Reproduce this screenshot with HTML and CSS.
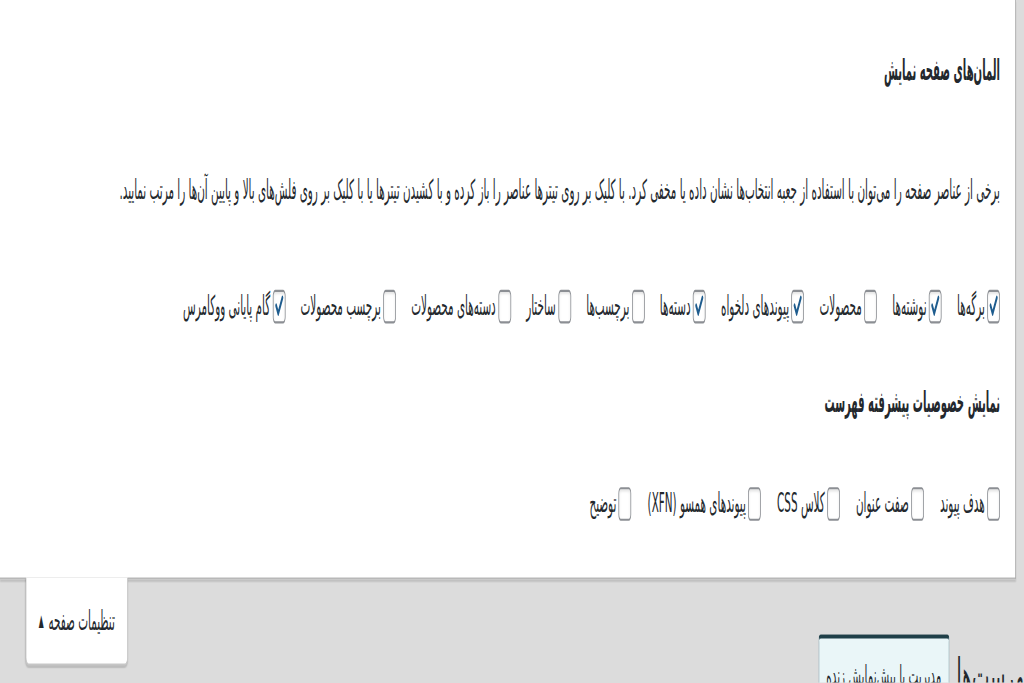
FILE: index.html
```html
<!DOCTYPE html>
<html lang="fa">
<head>
<meta charset="utf-8">
<title>تنظیمات صفحه</title>
<link rel="stylesheet" href="styles.css">
</head>
<body>
<div class="stage" dir="rtl">
  <div class="screen-meta">
    <h5 class="sec-title">المان‌های صفحه نمایش</h5>
    <p class="desc">برخی از عناصر صفحه را می‌توان با استفاده از جعبه انتخاب‌ها نشان داده یا مخفی کرد. با کلیک بر روی تیترها عناصر را باز کرده و با کشیدن تیترها یا با کلیک بر روی فلش‌های بالا و پایین آن‌ها را مرتب نمایید.</p>
    <div class="prefs prefs-one">
      <label class="opt"><span class="cb on"><svg viewBox="0 0 16 16"><path d="M3.6 7.4 L6.6 11.8 L12.6 3.2" /></svg></span>برگه‌ها</label>
      <label class="opt"><span class="cb on"><svg viewBox="0 0 16 16"><path d="M3.6 7.4 L6.6 11.8 L12.6 3.2" /></svg></span>نوشته‌ها</label>
      <label class="opt"><span class="cb"></span>محصولات</label>
      <label class="opt"><span class="cb on"><svg viewBox="0 0 16 16"><path d="M3.6 7.4 L6.6 11.8 L12.6 3.2" /></svg></span>پیوندهای دلخواه</label>
      <label class="opt"><span class="cb on"><svg viewBox="0 0 16 16"><path d="M3.6 7.4 L6.6 11.8 L12.6 3.2" /></svg></span>دسته‌ها</label>
      <label class="opt"><span class="cb"></span>برچسب‌ها</label>
      <label class="opt"><span class="cb"></span>ساختار</label>
      <label class="opt"><span class="cb"></span>دسته‌های محصولات</label>
      <label class="opt"><span class="cb"></span>برچسب محصولات</label>
      <label class="opt"><span class="cb on"><svg viewBox="0 0 16 16"><path d="M3.6 7.4 L6.6 11.8 L12.6 3.2" /></svg></span>گام پایانی ووکامرس</label>
    </div>
    <h5 class="sec-title second">نمایش خصوصیات پیشرفته فهرست</h5>
    <div class="prefs prefs-two">
      <label class="opt"><span class="cb"></span>هدف پیوند</label>
      <label class="opt"><span class="cb"></span>صفت عنوان</label>
      <label class="opt"><span class="cb"></span>کلاس CSS</label>
      <label class="opt"><span class="cb"></span>پیوندهای همسو (XFN)</label>
      <label class="opt"><span class="cb"></span>توضیح</label>
    </div>
  </div>
  <div class="below">
    <div class="title-row">
      <h1 class="page-title">فهرست‌ها</h1>
      <span class="live-btn">مدیریت با پیش‌نمایش زنده</span>
    </div>
    <div class="tab"><span>تنظیمات صفحه</span><span class="arrow">▲</span></div>
  </div>
</div>
</body>
</html>
```
FILE: styles.css
```css
html, body {
  margin: 0;
  padding: 0;
  width: 1024px;
  height: 683px;
  overflow: hidden;
  background: #dcdcdc;
}

.stage {
  width: 1280px;
  height: 325px;
  transform: scale(0.8, 2.1);
  transform-origin: 0 0;
  font-family: "DejaVu Sans", sans-serif;
  color: #23282d;
  background: #dcdcdc;
  overflow: hidden;
}

.screen-meta {
  width: 1250px;
  background: #ffffff;
  border-right: 1px solid #a9a9a9;
  border-bottom: 1px solid #b8b8b8;
  box-shadow: 0 1px 1px rgba(0, 0, 0, 0.12);
  padding: 25px 19px 27px 0;
  margin-right: 10px;
  margin-left: 0;
}

.sec-title {
  margin: 0;
  font-family: "DejaVu Sans Condensed", "DejaVu Sans", sans-serif;
  font-size: 14px;
  line-height: 16px;
  font-weight: 600;
}

.sec-title.second {
  margin-top: 29px;
}

.desc {
  margin: 42px 0 0 0;
  font-size: 13px;
  line-height: 16px;
  white-space: nowrap;
}

.prefs {
  display: flex;
  flex-wrap: nowrap;
  align-items: center;
  font-size: 13px;
  line-height: 16px;
}

.prefs-one {
  margin-top: 39px;
  gap: 19px;
}

.prefs-two {
  margin-top: 33px;
  gap: 20px;
}

.opt {
  display: flex;
  align-items: center;
  gap: 3px;
  white-space: nowrap;
}

.cb {
  width: 16px;
  height: 16px;
  box-sizing: border-box;
  border: 1px solid #8c8f94;
  border-radius: 3px;
  background: #ffffff;
  box-shadow: inset 0 1px 2px rgba(0, 0, 0, 0.1);
  display: flex;
  align-items: center;
  justify-content: center;
  flex: none;
}

.cb svg {
  width: 14px;
  height: 14px;
}

.cb svg path {
  fill: none;
  stroke: #1e5c8e;
  stroke-width: 2.4;
  stroke-linecap: round;
  stroke-linejoin: round;
}

.below {
  display: flex;
  justify-content: space-between;
  align-items: flex-start;
  padding-left: 32px;
}

.tab {
  width: 128px;
  height: 42px;
  margin-top: -1px;
  box-sizing: border-box;
  background: #ffffff;
  border: 1px solid #c6c6c6;
  border-top: none;
  border-radius: 0 0 4px 4px;
  box-shadow: 0 1px 1px rgba(0, 0, 0, 0.15);
  font-size: 13px;
  line-height: 16px;
  display: flex;
  align-items: center;
  justify-content: center;
  gap: 6px;
}

.arrow {
  font-size: 8px;
}

.title-row {
  display: flex;
  align-items: flex-start;
  gap: 9px;
  margin-top: 26px;
  margin-right: -11px;
}

.page-title {
  margin: 6px 0 0 0;
  font-size: 23px;
  line-height: 28px;
  font-weight: 400;
}

.live-btn {
  width: 164px;
  height: 28px;
  box-sizing: border-box;
  background: #eaf6f8;
  border: 1px solid #6f8f99;
  border-top: 2px solid #1f3f48;
  border-radius: 3px;
  font-size: 13px;
  line-height: 24px;
  text-align: center;
  white-space: nowrap;
  overflow: hidden;
  padding-top: 6px;
}
```
